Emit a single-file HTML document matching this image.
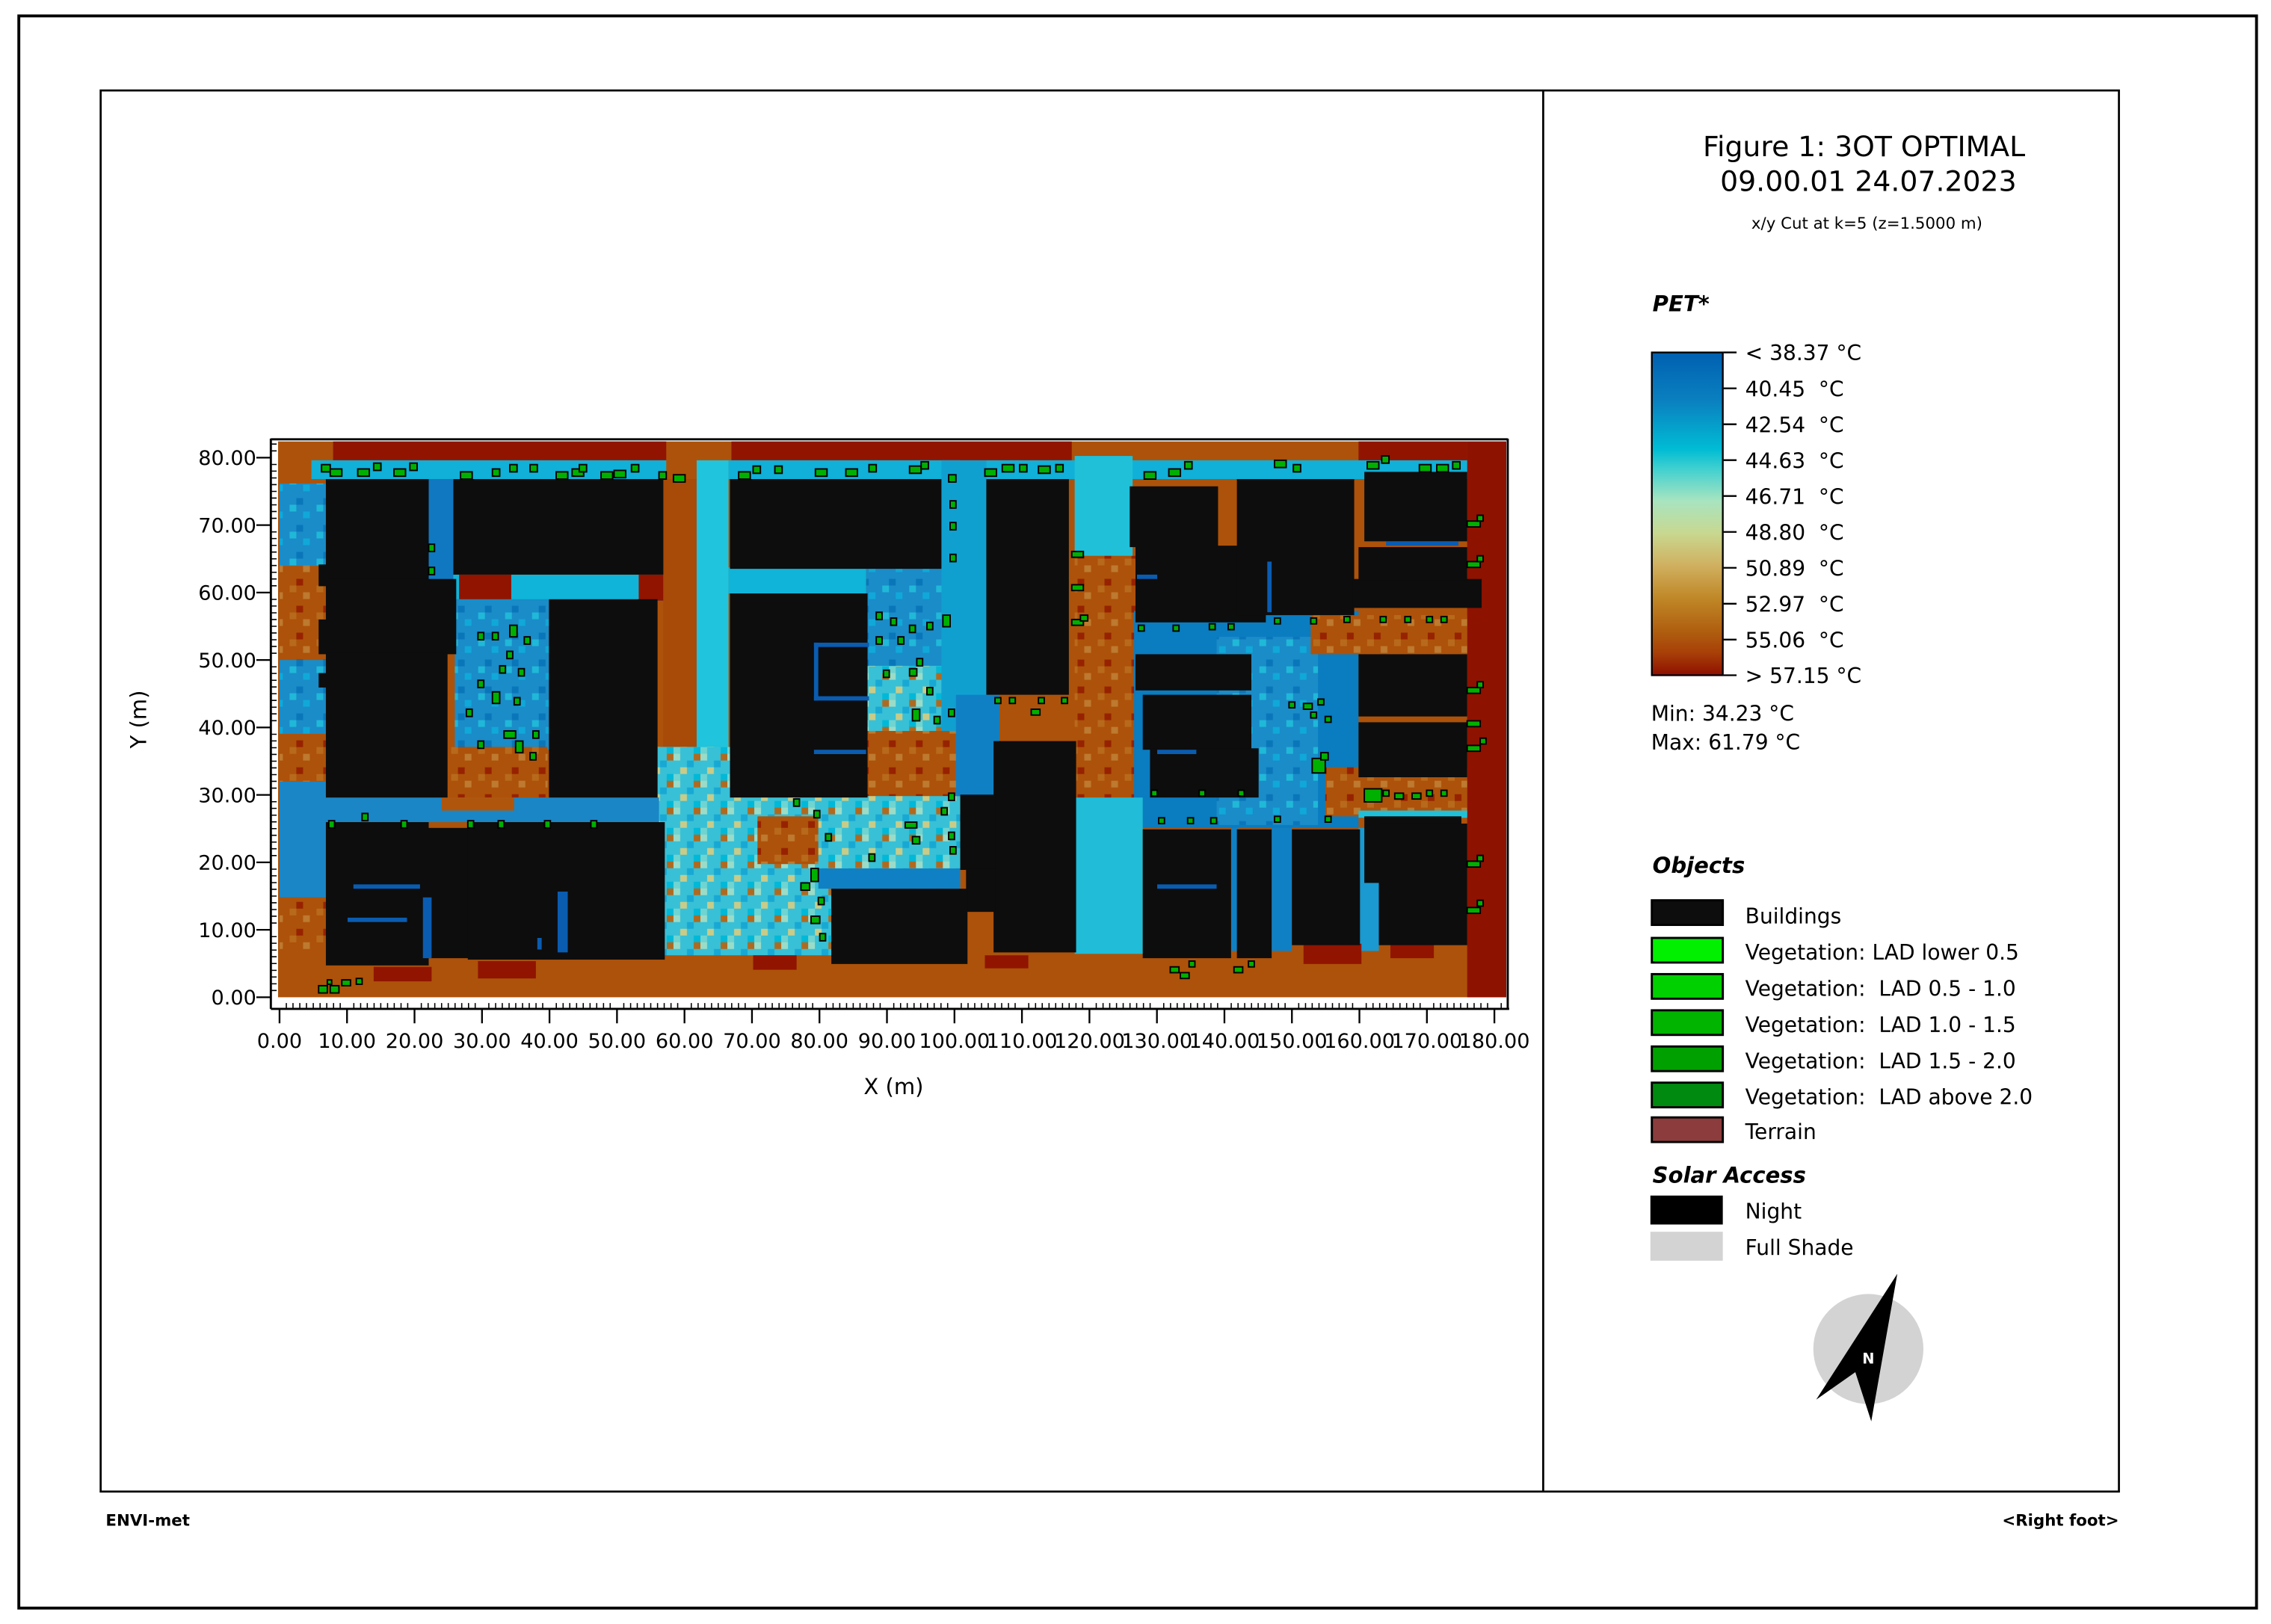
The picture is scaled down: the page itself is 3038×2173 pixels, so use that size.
<!DOCTYPE html>
<html><head><meta charset="utf-8"><style>
html,body{margin:0;padding:0;background:#fff;}
svg{display:block;}
text{font-family:"DejaVu Sans","Liberation Sans",sans-serif;fill:#000;}
</style></head><body>
<svg width="3038" height="2173" viewBox="0 0 1568 1122" preserveAspectRatio="none" xmlns="http://www.w3.org/2000/svg">
<defs>
<linearGradient id="cb" x1="0" y1="0" x2="0" y2="1">
<stop offset="0" stop-color="#0060b0"/><stop offset="0.15" stop-color="#0a80c0"/>
<stop offset="0.3" stop-color="#00bcd4"/><stop offset="0.36" stop-color="#40d0d0"/>
<stop offset="0.46" stop-color="#a8e4c0"/><stop offset="0.56" stop-color="#c8d890"/>
<stop offset="0.66" stop-color="#d0b060"/><stop offset="0.76" stop-color="#c08828"/>
<stop offset="0.86" stop-color="#b06010"/><stop offset="0.93" stop-color="#a84008"/>
<stop offset="1" stop-color="#8f1000"/></linearGradient>
<pattern id="sp" patternUnits="userSpaceOnUse" width="18.6" height="18.6">
<rect width="18.6" height="18.6" fill="#38c0d6"/>
<rect x="0" y="0" width="4.65" height="4.65" fill="#9adcc8"/>
<rect x="9.3" y="4.65" width="4.65" height="4.65" fill="#18a8d4"/>
<rect x="4.65" y="9.3" width="4.65" height="4.65" fill="#c8cc88"/>
<rect x="13.95" y="13.95" width="4.65" height="4.65" fill="#00b8d8"/>
<rect x="13.95" y="0" width="4.65" height="4.65" fill="#b06a20"/>
<rect x="0" y="13.95" width="4.65" height="4.65" fill="#70d4d0"/>
</pattern>
<pattern id="sb" patternUnits="userSpaceOnUse" width="18.6" height="18.6">
<rect width="18.6" height="18.6" fill="#1a8cc8"/>
<rect x="4.65" y="0" width="4.65" height="4.65" fill="#10a8d8"/>
<rect x="0" y="9.3" width="4.65" height="4.65" fill="#0a76ba"/>
<rect x="13.95" y="13.95" width="4.65" height="4.65" fill="#20b8d8"/>
</pattern>
<pattern id="so" patternUnits="userSpaceOnUse" width="18.6" height="18.6">
<rect width="18.6" height="18.6" fill="#ad520a"/>
<rect x="4.65" y="0" width="4.65" height="4.65" fill="#bd7a30"/>
<rect x="0" y="9.3" width="4.65" height="4.65" fill="#962200"/>
<rect x="13.95" y="13.95" width="4.65" height="4.65" fill="#b86a1c"/>
</pattern>
</defs>

<rect x="13" y="11" width="1545" height="1100" fill="none" stroke="#000" stroke-width="2"/>
<rect x="69.5" y="62.5" width="1393.5" height="968" fill="none" stroke="#000" stroke-width="1.4"/>
<line x1="1065.5" y1="62" x2="1065.5" y2="1031" stroke="#000" stroke-width="1.4"/>

<rect x="192" y="305" width="848" height="384" fill="#ad520a"/>
<rect x="230" y="305" width="230" height="13" fill="#901400"/>
<rect x="505" y="305" width="235" height="13" fill="#901400"/>
<rect x="1013" y="305" width="27" height="384" fill="#8e1200"/>
<rect x="938" y="305" width="75" height="14" fill="#901400"/>
<rect x="193" y="334" width="32" height="57" fill="url(#sb)"/>
<rect x="193" y="391" width="32" height="65" fill="url(#so)"/>
<rect x="193" y="456" width="32" height="51" fill="url(#sb)"/>
<rect x="193" y="507" width="32" height="33" fill="url(#so)"/>
<rect x="193" y="540" width="32" height="80" fill="#1a86c6"/>
<rect x="193" y="620" width="32" height="40" fill="url(#so)"/>
<rect x="215" y="318" width="245" height="13" fill="#10b0d8"/>
<rect x="295" y="331" width="20" height="70" fill="#1078c0"/>
<rect x="313" y="397" width="145" height="18" fill="#10b4d8"/>
<rect x="317" y="397" width="36" height="18" fill="#901400"/>
<rect x="441" y="397" width="17" height="18" fill="#901400"/>
<rect x="314" y="414" width="65" height="104" fill="url(#sb)"/>
<rect x="305" y="516" width="73" height="35" fill="url(#so)"/>
<rect x="458" y="331" width="23" height="220" fill="#a84a08"/>
<rect x="481" y="318" width="22" height="240" fill="#20c4dc"/>
<rect x="503" y="318" width="160" height="13" fill="#10b0d8"/>
<rect x="503" y="392" width="95" height="18" fill="#10b4d8"/>
<rect x="598" y="392" width="85" height="120" fill="url(#sb)"/>
<rect x="598" y="460" width="65" height="52" fill="url(#sp)"/>
<rect x="650" y="318" width="31" height="200" fill="#10a0d0"/>
<rect x="598" y="505" width="65" height="45" fill="url(#so)"/>
<rect x="224" y="551" width="236" height="17" fill="#1a86c6"/>
<rect x="305" y="551" width="50" height="9" fill="#b0560c"/>
<rect x="454" y="516" width="50" height="35" fill="url(#sp)"/>
<rect x="455" y="550" width="120" height="110" fill="url(#sp)"/>
<rect x="523" y="564" width="48" height="33" fill="url(#so)"/>
<rect x="565" y="550" width="98" height="64" fill="url(#sp)"/>
<rect x="565" y="600" width="98" height="14" fill="#1080c4"/>
<rect x="660" y="480" width="30" height="70" fill="#1080c4"/>
<rect x="681" y="318" width="332" height="13" fill="#10b0d8"/>
<rect x="742" y="315" width="40" height="70" fill="#20c0d8"/>
<rect x="742" y="384" width="42" height="170" fill="url(#so)"/>
<rect x="783" y="422" width="155" height="150" fill="#0a7cc0"/>
<rect x="840" y="440" width="70" height="130" fill="url(#sb)"/>
<rect x="905" y="425" width="108" height="27" fill="url(#so)"/>
<rect x="915" y="530" width="98" height="34" fill="url(#so)"/>
<rect x="938" y="560" width="75" height="5" fill="#20c0d8"/>
<rect x="742" y="551" width="47" height="108" fill="#20bcd8"/>
<rect x="878" y="572" width="14" height="85" fill="#1080c4"/>
<rect x="938" y="572" width="14" height="85" fill="#1a9ad0"/>
<rect x="850" y="572" width="5" height="85" fill="#1080c4"/>
<rect x="258" y="668" width="40" height="10" fill="#901400"/>
<rect x="330" y="664" width="40" height="12" fill="#901400"/>
<rect x="520" y="660" width="30" height="10" fill="#901400"/>
<rect x="680" y="660" width="30" height="9" fill="#901400"/>
<rect x="900" y="652" width="40" height="14" fill="#901400"/>
<rect x="960" y="652" width="30" height="10" fill="#901400"/>

<g fill="#0d0d0d">
<rect x="225" y="331" width="71" height="70"/>
<rect x="225" y="400" width="90" height="52"/>
<rect x="225" y="451" width="84" height="100"/>
<rect x="220" y="390" width="6" height="15"/>
<rect x="220" y="428" width="6" height="24"/>
<rect x="220" y="465" width="6" height="10"/>
<rect x="313" y="331" width="145" height="66"/>
<rect x="379" y="414" width="75" height="137"/>
<rect x="504" y="331" width="146" height="62"/>
<rect x="504" y="410" width="95" height="141"/>
<rect x="681" y="331" width="57" height="149"/>
<rect x="686" y="512" width="57" height="146"/>
<rect x="663" y="549" width="24" height="52"/>
<rect x="667" y="600" width="20" height="30"/>
<rect x="574" y="614" width="94" height="52"/>
<rect x="225" y="568" width="71" height="99"/>
<rect x="296" y="572" width="28" height="90"/>
<rect x="323" y="568" width="136" height="95"/>
<rect x="780" y="336" width="61" height="42"/>
<rect x="784" y="377" width="90" height="53"/>
<rect x="854" y="331" width="81" height="94"/>
<rect x="934" y="400" width="89" height="20"/>
<rect x="938" y="378" width="75" height="23"/>
<rect x="942" y="326" width="71" height="48"/>
<rect x="784" y="452" width="80" height="25"/>
<rect x="789" y="480" width="75" height="38"/>
<rect x="794" y="517" width="75" height="34"/>
<rect x="938" y="452" width="75" height="43"/>
<rect x="938" y="499" width="75" height="38"/>
<rect x="789" y="573" width="61" height="89"/>
<rect x="854" y="573" width="24" height="89"/>
<rect x="892" y="573" width="47" height="80"/>
<rect x="942" y="564" width="67" height="46"/>
<rect x="952" y="569" width="61" height="84"/>
</g>
<g fill="#0a5cb0">
<rect x="562" y="444" width="38" height="3"/><rect x="562" y="444" width="3" height="40"/><rect x="562" y="481" width="38" height="3"/>
<rect x="562" y="518" width="36" height="3"/>
<rect x="244" y="611" width="46" height="3"/><rect x="240" y="634" width="41" height="3"/>
<rect x="292" y="620" width="6" height="42"/><rect x="385" y="616" width="7" height="42"/>
<rect x="371" y="648" width="3" height="8"/>
<rect x="957" y="374" width="50" height="3"/>
<rect x="875" y="388" width="3" height="35"/>
<rect x="799" y="518" width="27" height="3"/>
<rect x="799" y="611" width="41" height="3"/>
<rect x="785" y="397" width="14" height="3"/>
</g>

<g fill="#00b000" stroke="#000" stroke-width="1">
<rect x="222" y="321" width="6" height="5"/><rect x="228" y="324" width="8" height="5"/><rect x="247" y="324" width="8" height="5"/><rect x="258" y="320" width="5" height="5"/><rect x="272" y="324" width="8" height="5"/><rect x="283" y="320" width="5" height="5"/>
<rect x="318" y="326" width="8" height="5"/><rect x="340" y="324" width="5" height="5"/><rect x="352" y="321" width="5" height="5"/><rect x="366" y="321" width="5" height="5"/><rect x="384" y="326" width="8" height="5"/><rect x="395" y="324" width="8" height="5"/><rect x="400" y="321" width="5" height="5"/><rect x="415" y="326" width="8" height="5"/><rect x="424" y="325" width="8" height="5"/><rect x="436" y="321" width="5" height="5"/><rect x="455" y="326" width="5" height="5"/><rect x="465" y="328" width="8" height="5"/>
<rect x="510" y="326" width="8" height="5"/><rect x="520" y="322" width="5" height="5"/><rect x="535" y="322" width="5" height="5"/><rect x="563" y="324" width="8" height="5"/><rect x="584" y="324" width="8" height="5"/><rect x="600" y="321" width="5" height="5"/><rect x="628" y="322" width="8" height="5"/><rect x="636" y="319" width="5" height="5"/><rect x="655" y="328" width="5" height="5"/>
<rect x="680" y="324" width="8" height="5"/><rect x="692" y="321" width="8" height="5"/><rect x="704" y="321" width="5" height="5"/><rect x="717" y="322" width="8" height="5"/><rect x="729" y="321" width="5" height="5"/>
<rect x="790" y="326" width="8" height="5"/><rect x="807" y="324" width="8" height="5"/><rect x="818" y="319" width="5" height="5"/><rect x="880" y="318" width="8" height="5"/><rect x="893" y="321" width="5" height="5"/><rect x="944" y="319" width="8" height="5"/><rect x="954" y="315" width="5" height="5"/><rect x="980" y="321" width="8" height="5"/><rect x="992" y="321" width="8" height="5"/><rect x="1003" y="319" width="5" height="5"/>
<rect x="296" y="376" width="4" height="5"/><rect x="296" y="392" width="4" height="5"/><rect x="656" y="346" width="4" height="5"/><rect x="656" y="361" width="4" height="5"/><rect x="656" y="383" width="4" height="5"/>
<rect x="740" y="381" width="8" height="4"/><rect x="740" y="404" width="8" height="4"/><rect x="740" y="428" width="8" height="4"/><rect x="746" y="425" width="5" height="4"/>
<rect x="330" y="437" width="4" height="5"/><rect x="340" y="437" width="4" height="5"/><rect x="352" y="432" width="5" height="8"/><rect x="362" y="440" width="4" height="5"/><rect x="350" y="450" width="4" height="5"/><rect x="345" y="460" width="4" height="5"/><rect x="358" y="462" width="4" height="5"/><rect x="330" y="470" width="4" height="5"/><rect x="340" y="478" width="5" height="8"/><rect x="355" y="482" width="4" height="5"/><rect x="330" y="512" width="4" height="5"/><rect x="348" y="505" width="8" height="5"/><rect x="356" y="512" width="5" height="8"/><rect x="368" y="505" width="4" height="5"/><rect x="366" y="520" width="4" height="5"/><rect x="322" y="490" width="4" height="5"/>
<rect x="605" y="423" width="4" height="5"/><rect x="615" y="427" width="4" height="5"/><rect x="628" y="432" width="4" height="5"/><rect x="640" y="430" width="4" height="5"/><rect x="651" y="425" width="5" height="8"/><rect x="605" y="440" width="4" height="5"/><rect x="620" y="440" width="4" height="5"/><rect x="633" y="455" width="4" height="5"/><rect x="628" y="462" width="5" height="5"/><rect x="610" y="463" width="4" height="5"/><rect x="640" y="475" width="4" height="5"/><rect x="630" y="490" width="5" height="8"/><rect x="645" y="495" width="4" height="5"/><rect x="655" y="490" width="4" height="5"/>
<rect x="227" y="567" width="4" height="5"/><rect x="250" y="562" width="4" height="5"/><rect x="277" y="567" width="4" height="5"/><rect x="323" y="567" width="4" height="5"/><rect x="344" y="567" width="4" height="5"/><rect x="376" y="567" width="4" height="5"/><rect x="408" y="567" width="4" height="5"/>
<rect x="220" y="681" width="6" height="5"/><rect x="228" y="681" width="6" height="5"/><rect x="236" y="677" width="6" height="4"/><rect x="246" y="676" width="4" height="4"/><rect x="226" y="677" width="3" height="3"/>
<rect x="548" y="552" width="4" height="5"/><rect x="562" y="560" width="4" height="5"/><rect x="570" y="576" width="4" height="5"/><rect x="560" y="600" width="5" height="9"/><rect x="553" y="610" width="6" height="5"/><rect x="565" y="620" width="4" height="5"/><rect x="560" y="633" width="6" height="5"/><rect x="566" y="645" width="4" height="5"/><rect x="600" y="590" width="4" height="5"/><rect x="625" y="568" width="8" height="4"/><rect x="630" y="578" width="5" height="5"/><rect x="650" y="558" width="4" height="5"/><rect x="655" y="575" width="4" height="5"/><rect x="656" y="585" width="4" height="5"/><rect x="655" y="548" width="4" height="5"/>
<rect x="687" y="482" width="4" height="4"/><rect x="697" y="482" width="4" height="4"/><rect x="717" y="482" width="4" height="4"/><rect x="733" y="482" width="4" height="4"/><rect x="712" y="490" width="6" height="4"/>
<rect x="786" y="432" width="4" height="4"/><rect x="810" y="432" width="4" height="4"/><rect x="835" y="431" width="4" height="4"/><rect x="848" y="431" width="4" height="4"/><rect x="880" y="427" width="4" height="4"/><rect x="905" y="427" width="4" height="4"/><rect x="928" y="426" width="4" height="4"/><rect x="953" y="426" width="4" height="4"/><rect x="970" y="426" width="4" height="4"/><rect x="985" y="426" width="4" height="4"/><rect x="995" y="426" width="4" height="4"/>
<rect x="1013" y="360" width="9" height="4"/><rect x="1020" y="356" width="4" height="4"/><rect x="1013" y="388" width="9" height="4"/><rect x="1020" y="384" width="4" height="4"/><rect x="1013" y="475" width="9" height="4"/><rect x="1020" y="471" width="4" height="4"/><rect x="1013" y="498" width="9" height="4"/><rect x="1013" y="515" width="9" height="4"/><rect x="1022" y="510" width="4" height="4"/>
<rect x="890" y="485" width="4" height="4"/><rect x="900" y="486" width="6" height="4"/><rect x="910" y="483" width="4" height="4"/><rect x="905" y="492" width="4" height="4"/><rect x="915" y="495" width="4" height="4"/><rect x="906" y="524" width="9" height="10"/><rect x="912" y="520" width="5" height="5"/>
<rect x="942" y="545" width="12" height="9"/><rect x="955" y="546" width="4" height="4"/><rect x="963" y="548" width="6" height="4"/><rect x="975" y="548" width="6" height="4"/><rect x="985" y="546" width="4" height="4"/><rect x="995" y="546" width="4" height="4"/>
<rect x="795" y="546" width="4" height="4"/><rect x="828" y="546" width="4" height="4"/><rect x="855" y="546" width="4" height="4"/><rect x="800" y="565" width="4" height="4"/><rect x="820" y="565" width="4" height="4"/><rect x="836" y="565" width="4" height="4"/><rect x="880" y="564" width="4" height="4"/><rect x="915" y="564" width="4" height="4"/>
<rect x="1013" y="595" width="9" height="4"/><rect x="1020" y="591" width="4" height="4"/><rect x="1013" y="627" width="9" height="4"/><rect x="1020" y="622" width="4" height="4"/>
<rect x="808" y="668" width="6" height="4"/><rect x="821" y="664" width="4" height="4"/><rect x="815" y="672" width="6" height="4"/><rect x="852" y="668" width="6" height="4"/><rect x="862" y="664" width="4" height="4"/>
</g>

<g stroke="#000" fill="none">
<line x1="187" y1="303" x2="187" y2="697" stroke-width="1.5"/>
<line x1="187" y1="697" x2="1042" y2="697" stroke-width="1.5"/>
<line x1="187" y1="303.5" x2="1041" y2="303.5" stroke-width="1.5"/>
<line x1="1041" y1="303" x2="1041" y2="697" stroke-width="1.5"/>
</g>
<path stroke="#000" stroke-width="0.8" fill="none" d="M187 684.3h4M187 679.7h4M187 675h4M187 670.4h4M187 665.7h4M187 661h4M187 656.4h4M187 651.7h4M187 647.1h4M187 637.7h4M187 633h4M187 628.4h4M187 623.7h4M187 619.1h4M187 614.4h4M187 609.8h4M187 605.1h4M187 600.5h4M187 591.1h4M187 586.4h4M187 581.8h4M187 577.1h4M187 572.5h4M187 567.8h4M187 563.2h4M187 558.5h4M187 553.9h4M187 544.5h4M187 539.8h4M187 535.2h4M187 530.5h4M187 525.9h4M187 521.2h4M187 516.6h4M187 511.9h4M187 507.3h4M187 497.9h4M187 493.2h4M187 488.6h4M187 483.9h4M187 479.3h4M187 474.6h4M187 470h4M187 465.3h4M187 460.7h4M187 451.3h4M187 446.6h4M187 442h4M187 437.3h4M187 432.7h4M187 428h4M187 423.4h4M187 418.7h4M187 414.1h4M187 404.7h4M187 400h4M187 395.4h4M187 390.7h4M187 386.1h4M187 381.4h4M187 376.8h4M187 372.1h4M187 367.5h4M187 358.1h4M187 353.4h4M187 348.8h4M187 344.1h4M187 339.5h4M187 334.8h4M187 330.2h4M187 325.5h4M187 320.9h4M187 311.5h4M187 306.8h4"/>
<path stroke="#000" stroke-width="0.8" fill="none" d="
M197.7 697v-4M202.3 697v-4M207 697v-4M211.6 697v-4M216.3 697v-4M221 697v-4M225.6 697v-4M230.3 697v-4M234.9 697v-4
M244.3 697v-4M249 697v-4M253.6 697v-4M258.3 697v-4M262.9 697v-4M267.6 697v-4M272.2 697v-4M276.9 697v-4M281.5 697v-4
M290.9 697v-4M295.6 697v-4M300.2 697v-4M304.9 697v-4M309.5 697v-4M314.2 697v-4M318.8 697v-4M323.5 697v-4M328.1 697v-4
M337.5 697v-4M342.2 697v-4M346.8 697v-4M351.5 697v-4M356.1 697v-4M360.8 697v-4M365.4 697v-4M370.1 697v-4M374.7 697v-4
M384.1 697v-4M388.8 697v-4M393.4 697v-4M398.1 697v-4M402.7 697v-4M407.4 697v-4M412 697v-4M416.7 697v-4M421.3 697v-4
M430.7 697v-4M435.4 697v-4M440 697v-4M444.7 697v-4M449.3 697v-4M454 697v-4M458.6 697v-4M463.3 697v-4M467.9 697v-4
M477.3 697v-4M482 697v-4M486.6 697v-4M491.3 697v-4M495.9 697v-4M500.6 697v-4M505.2 697v-4M509.9 697v-4M514.5 697v-4
M523.9 697v-4M528.6 697v-4M533.2 697v-4M537.9 697v-4M542.5 697v-4M547.2 697v-4M551.8 697v-4M556.5 697v-4M561.1 697v-4
M570.5 697v-4M575.2 697v-4M579.8 697v-4M584.5 697v-4M589.1 697v-4M593.8 697v-4M598.4 697v-4M603.1 697v-4M607.7 697v-4
M617.1 697v-4M621.8 697v-4M626.4 697v-4M631.1 697v-4M635.7 697v-4M640.4 697v-4M645 697v-4M649.7 697v-4M654.3 697v-4
M663.7 697v-4M668.4 697v-4M673 697v-4M677.7 697v-4M682.3 697v-4M687 697v-4M691.6 697v-4M696.3 697v-4M700.9 697v-4
M710.3 697v-4M715 697v-4M719.6 697v-4M724.3 697v-4M728.9 697v-4M733.6 697v-4M738.2 697v-4M742.9 697v-4M747.5 697v-4
M756.9 697v-4M761.6 697v-4M766.2 697v-4M770.9 697v-4M775.5 697v-4M780.2 697v-4M784.8 697v-4M789.5 697v-4M794.1 697v-4
M803.5 697v-4M808.2 697v-4M812.8 697v-4M817.5 697v-4M822.1 697v-4M826.8 697v-4M831.4 697v-4M836.1 697v-4M840.7 697v-4
M850.1 697v-4M854.8 697v-4M859.4 697v-4M864.1 697v-4M868.7 697v-4M873.4 697v-4M878 697v-4M882.7 697v-4M887.3 697v-4
M896.7 697v-4M901.4 697v-4M906 697v-4M910.7 697v-4M915.3 697v-4M920 697v-4M924.6 697v-4M929.3 697v-4M933.9 697v-4
M943.3 697v-4M948 697v-4M952.6 697v-4M957.3 697v-4M961.9 697v-4M966.6 697v-4M971.2 697v-4M975.9 697v-4M980.5 697v-4
M989.9 697v-4M994.6 697v-4M999.2 697v-4M1003.9 697v-4M1008.5 697v-4M1013.2 697v-4M1017.8 697v-4M1022.5 697v-4M1027.1 697v-4M1036.5 697v-4"/>
<path stroke="#000" stroke-width="1.2" fill="none" d="M193 697v10M239.6 697v10M286.2 697v10M332.8 697v10M379.4 697v10M426 697v10M472.6 697v10M519.2 697v10M565.8 697v10M612.4 697v10M659 697v10M705.6 697v10M752.2 697v10M798.8 697v10M845.4 697v10M892 697v10M938.6 697v10M985.2 697v10M1031.8 697v10
M177 689h10M177 642.4h10M177 595.8h10M177 549.2h10M177 502.6h10M177 456h10M177 409.4h10M177 362.8h10M177 316.2h10"/>
<g font-size="14" text-anchor="end">
<text x="177" y="694">0.00</text><text x="177" y="647.4">10.00</text><text x="177" y="600.8">20.00</text><text x="177" y="554.2">30.00</text><text x="177" y="507.6">40.00</text><text x="177" y="461">50.00</text><text x="177" y="414.4">60.00</text><text x="177" y="367.8">70.00</text><text x="177" y="321.2">80.00</text>
</g>
<g font-size="14" text-anchor="middle">
<text x="193" y="724">0.00</text><text x="239.6" y="724">10.00</text><text x="286.2" y="724">20.00</text><text x="332.8" y="724">30.00</text><text x="379.4" y="724">40.00</text><text x="426" y="724">50.00</text><text x="472.6" y="724">60.00</text><text x="519.2" y="724">70.00</text><text x="565.8" y="724">80.00</text><text x="612.4" y="724">90.00</text><text x="659" y="724">100.00</text><text x="705.6" y="724">110.00</text><text x="752.2" y="724">120.00</text><text x="798.8" y="724">130.00</text><text x="845.4" y="724">140.00</text><text x="892" y="724">150.00</text><text x="938.6" y="724">160.00</text><text x="985.2" y="724">170.00</text><text x="1031.8" y="724">180.00</text>
<text x="617" y="756" font-size="15">X (m)</text>
<text x="0" y="0" font-size="15" transform="translate(101,497) rotate(-90)">Y (m)</text>
</g>

<g text-anchor="middle" font-size="19.5">
<text x="1287" y="108">Figure 1: 3OT OPTIMAL</text>
<text x="1290" y="132">09.00.01 24.07.2023</text>
<text x="1289" y="158" font-size="11">x/y Cut at k=5 (z=1.5000 m)</text>
</g>
<text x="1141" y="215" font-size="15" font-weight="bold" font-style="italic">PET*</text>
<rect x="1140.5" y="243.5" width="49" height="223" fill="url(#cb)" stroke="#000" stroke-width="1.2"/>
<path stroke="#000" stroke-width="1.2" d="M1190 243.5h9M1190 268.3h9M1190 293.1h9M1190 317.9h9M1190 342.7h9M1190 367.5h9M1190 392.3h9M1190 417.1h9M1190 441.9h9M1190 466.5h9"/>
<g font-size="14.5">
<text x="1205" y="249">&lt; 38.37 °C</text>
<text x="1205" y="273.8">40.45&#160;&#160;°C</text>
<text x="1205" y="298.6">42.54&#160;&#160;°C</text>
<text x="1205" y="323.4">44.63&#160;&#160;°C</text>
<text x="1205" y="348.2">46.71&#160;&#160;°C</text>
<text x="1205" y="373">48.80&#160;&#160;°C</text>
<text x="1205" y="397.8">50.89&#160;&#160;°C</text>
<text x="1205" y="422.6">52.97&#160;&#160;°C</text>
<text x="1205" y="447.4">55.06&#160;&#160;°C</text>
<text x="1205" y="472">&gt; 57.15 °C</text>
<text x="1140" y="498">Min: 34.23 °C</text>
<text x="1140" y="518">Max: 61.79 °C</text>
</g>
<text x="1141" y="603" font-size="15" font-weight="bold" font-style="italic">Objects</text>
<g stroke="#000" stroke-width="1.5">
<rect x="1140.5" y="622" width="49" height="17" fill="#0d0d0d"/>
<rect x="1140.5" y="648" width="49" height="17" fill="#00f000"/>
<rect x="1140.5" y="673" width="49" height="17" fill="#00d000"/>
<rect x="1140.5" y="698" width="49" height="17" fill="#00b400"/>
<rect x="1140.5" y="723" width="49" height="17" fill="#00a000"/>
<rect x="1140.5" y="748" width="49" height="17" fill="#008a10"/>
<rect x="1140.5" y="772" width="49" height="17" fill="#8c3c3c"/>
</g>
<rect x="1139.5" y="826" width="50" height="20" fill="#000"/>
<rect x="1139.5" y="851" width="50" height="20" fill="#d3d3d3"/>
<g font-size="14.5">
<text x="1205" y="638">Buildings</text>
<text x="1205" y="663">Vegetation: LAD lower 0.5</text>
<text x="1205" y="688">Vegetation:&#160; LAD 0.5 - 1.0</text>
<text x="1205" y="713">Vegetation:&#160; LAD 1.0 - 1.5</text>
<text x="1205" y="738">Vegetation:&#160; LAD 1.5 - 2.0</text>
<text x="1205" y="763">Vegetation:&#160; LAD above 2.0</text>
<text x="1205" y="787">Terrain</text>
<text x="1205" y="842">Night</text>
<text x="1205" y="867">Full Shade</text>
</g>
<text x="1141" y="817" font-size="15" font-weight="bold" font-style="italic">Solar Access</text>

<ellipse cx="1290" cy="932" rx="38" ry="38" fill="#d3d3d3"/>
<polygon points="1310,880 1292,982 1281,948 1254,967" fill="#000"/>
<text x="1290" y="942" font-size="10" font-weight="bold" text-anchor="middle" style="fill:#fff">N</text>

<text x="73" y="1054" font-size="11" font-weight="bold">ENVI-met</text>
<text x="1463" y="1054" font-size="11" font-weight="bold" text-anchor="end">&lt;Right foot&gt;</text>
</svg>
</body></html>
